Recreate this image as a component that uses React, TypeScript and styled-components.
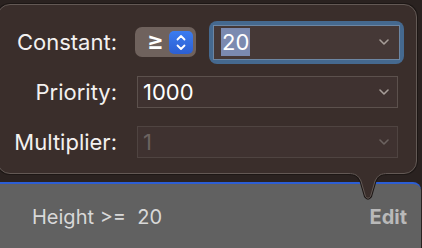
import React from "react";
import styled, { createGlobalStyle } from "styled-components";

const Global = createGlobalStyle`
  html, body { margin: 0; padding: 0; background: #2a2220; }
  body {
    width: 422px; height: 248px; overflow: hidden;
    font-family: Inter, "Noto Sans", sans-serif;
    -webkit-font-smoothing: antialiased;
  }
`;

const Screen = styled.div`
  width: 422px;
  height: 248px;
  display: flex;
  flex-direction: column;
  overflow: hidden;
  background: #2a2220;
`;

const Popover = styled.div`
  position: relative;
  z-index: 2;
  margin: 4px 5px 0 -3px;
  height: 170px;
  flex: none;
  box-sizing: border-box;
  border: 1px solid #635955;
  box-shadow: 0 0 0 1px #1d1715;
  border-radius: 13px;
  background: #3a2e2b;
  padding: 15px 12px 0 0;
  display: grid;
  grid-template-columns: 119px 1fr;
  grid-auto-rows: 44px;
  row-gap: 6px;
  column-gap: 18px;
  align-items: center;
`;

const Label = styled.div`
  text-align: right;
  font-size: 22px;
  color: #f3f1f0;
  white-space: nowrap;
`;

const ControlRow = styled.div`
  display: flex;
  align-items: center;
  gap: 13px;
`;

const Stepper = styled.div`
  width: 61px;
  height: 30px;
  box-sizing: border-box;
  border-radius: 7px;
  background: #6f625d;
  display: flex;
  align-items: center;
  justify-content: space-between;
  padding: 0 3px 0 12px;
`;

const Relation = styled.span`
  font-size: 25px;
  font-weight: 600;
  color: #ffffff;
  line-height: 1;
  margin-top: -2px;
`;

const StepButton = styled.div`
  width: 24px;
  height: 23px;
  border-radius: 5px;
  background: linear-gradient(#3b7cf0, #2c5fd2);
  display: flex;
`;

const FocusRing = styled.div`
  width: 195px;
  height: 43px;
  box-sizing: border-box;
  border-radius: 8px;
  background: #45698f;
  padding: 4px;
  display: flex;
`;

const Field = styled.div<{ $disabled?: boolean }>`
  flex: 1;
  box-sizing: border-box;
  border: 1px solid ${(p) => (p.$disabled ? "#4f4441" : "#5c514d")};
  background: #3f3230;
  display: flex;
  align-items: center;
  padding: 0 8px 0 5px;
  font-size: 22px;
  color: ${(p) => (p.$disabled ? "#6c6360" : "#ffffff")};
`;

const FocusedField = styled(Field)`
  border-color: #6c86a3;
  background: #453836;
  padding: 0 10px 0 7px;
`;

const FieldRow = styled.div`
  display: flex;
  height: 32px;
  margin: 0 6px 0 2px;
`;

const Selected = styled.span`
  background: #7b8ab0;
  line-height: 28px;
  padding: 0 1px;
`;

const Value = styled.span`
  line-height: 28px;
`;

const Chevron = styled.svg`
  margin-left: auto;
  flex: none;
`;

const Arrow = styled.svg`
  position: absolute;
  left: 350px;
  top: calc(100% - 1px);
`;

const Panel = styled.div`
  margin-top: 8px;
  margin-right: 1px;
  flex: 1;
  background: #616161;
  border-top: 2px solid #2c5ed4;
  border-top-right-radius: 8px;
  display: flex;
  justify-content: space-between;
  padding: 22px 14px 0 32px;
  font-size: 20px;
  line-height: 22px;
  color: #d8d8d8;
`;

const Summary = styled.span`
  white-space: pre;
`;

const EditLink = styled.span`
  font-weight: 700;
  color: #b9b9b9;
`;

const Down = ({ color }: { color: string }) => (
  <Chevron width="10" height="6" viewBox="0 0 10 6">
    <polyline points="1,1 5,5 9,1" fill="none" stroke={color} strokeWidth="1.6" strokeLinecap="round" strokeLinejoin="round" />
  </Chevron>
);

export default function App() {
  return (
    <Screen>
      <Global />
      <Popover>
        <Label>Constant:</Label>
        <ControlRow>
          <Stepper>
            <Relation>≥</Relation>
            <StepButton>
              <svg width="24" height="23" viewBox="0 0 24 23">
                <polyline points="8.5,8.5 12,5 15.5,8.5" fill="none" stroke="#fff" strokeWidth="1.8" strokeLinecap="round" strokeLinejoin="round" />
                <polyline points="8.5,14.5 12,18 15.5,14.5" fill="none" stroke="#fff" strokeWidth="1.8" strokeLinecap="round" strokeLinejoin="round" />
              </svg>
            </StepButton>
          </Stepper>
          <FocusRing>
            <FocusedField>
              <Selected>20</Selected>
              <Down color="#a69d98" />
            </FocusedField>
          </FocusRing>
        </ControlRow>

        <Label>Priority:</Label>
        <FieldRow>
          <Field>
            <Value>1000</Value>
            <Down color="#a69d98" />
          </Field>
        </FieldRow>

        <Label>Multiplier:</Label>
        <FieldRow>
          <Field $disabled>
            <Value>1</Value>
            <Down color="#6c6360" />
          </Field>
        </FieldRow>

        <Arrow width="40" height="28" viewBox="0 0 40 28">
          <path d="M0,1.5 C7,1.5 10,3 13,9 L17.5,24.5 Q20,28 22.5,24.5 L27,9 C30,3 33,1.5 40,1.5" fill="none" stroke="#1d1715" strokeWidth="3" />
          <path d="M0,0 H40 V1.5 C33,1.5 30,3 27,9 L22.5,24.5 Q20,28 17.5,24.5 L13,9 C10,3 7,1.5 0,1.5 Z" fill="#3a2e2b" />
          <path d="M0,1.5 C7,1.5 10,3 13,9 L17.5,24.5 Q20,28 22.5,24.5 L27,9 C30,3 33,1.5 40,1.5" fill="none" stroke="#635955" strokeWidth="1" />
        </Arrow>
      </Popover>
      <Panel>
        <Summary>Height &gt;=  20</Summary>
        <EditLink>Edit</EditLink>
      </Panel>
    </Screen>
  );
}
